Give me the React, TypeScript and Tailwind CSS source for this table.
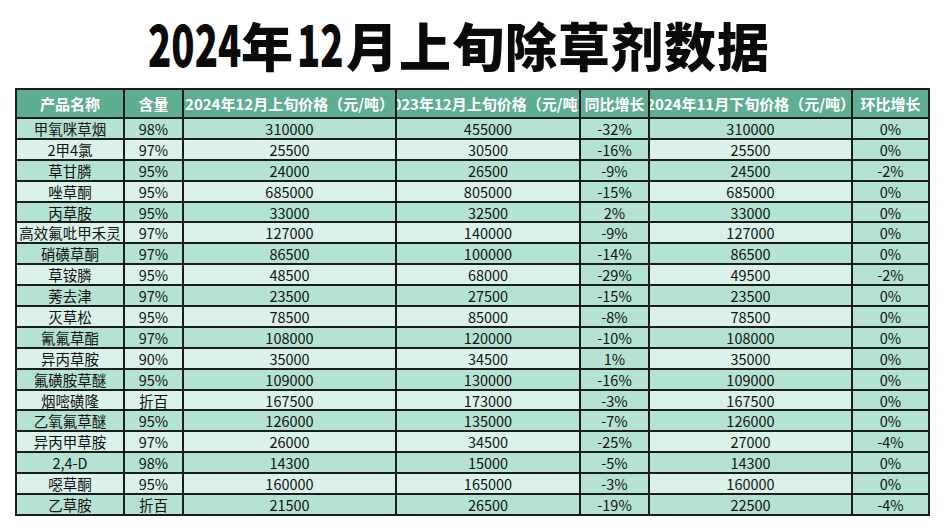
import React from "react";

type Row = [string, string, string, string, string, string, string];

const rows: Row[] = [
  ["甲氧咪草烟", "98%", "310000", "455000", "-32%", "310000", "0%"],
  ["2甲4氯", "97%", "25500", "30500", "-16%", "25500", "0%"],
  ["草甘膦", "95%", "24000", "26500", "-9%", "24500", "-2%"],
  ["唑草酮", "95%", "685000", "805000", "-15%", "685000", "0%"],
  ["丙草胺", "95%", "33000", "32500", "2%", "33000", "0%"],
  ["高效氟吡甲禾灵", "97%", "127000", "140000", "-9%", "127000", "0%"],
  ["硝磺草酮", "97%", "86500", "100000", "-14%", "86500", "0%"],
  ["草铵膦", "95%", "48500", "68000", "-29%", "49500", "-2%"],
  ["莠去津", "97%", "23500", "27500", "-15%", "23500", "0%"],
  ["灭草松", "95%", "78500", "85000", "-8%", "78500", "0%"],
  ["氰氟草酯", "97%", "108000", "120000", "-10%", "108000", "0%"],
  ["异丙草胺", "90%", "35000", "34500", "1%", "35000", "0%"],
  ["氟磺胺草醚", "95%", "109000", "130000", "-16%", "109000", "0%"],
  ["烟嘧磺隆", "折百", "167500", "173000", "-3%", "167500", "0%"],
  ["乙氧氟草醚", "95%", "126000", "135000", "-7%", "126000", "0%"],
  ["异丙甲草胺", "97%", "26000", "34500", "-25%", "27000", "-4%"],
  ["2,4-D", "98%", "14300", "15000", "-5%", "14300", "0%"],
  ["噁草酮", "95%", "160000", "165000", "-3%", "160000", "0%"],
  ["乙草胺", "折百", "21500", "26500", "-19%", "22500", "-4%"],
];

const headers = [
  "产品名称",
  "含量",
  "2024年12月上旬价格（元/吨）",
  "2023年12月上旬价格（元/吨）",
  "同比增长",
  "2024年11月下旬价格（元/吨）",
  "环比增长",
];

const widths = [108, 59, 213, 184, 69, 203, 77];

const font = { fontFamily: '"Noto Sans CJK SC", "Noto Sans", sans-serif' };

export default function App() {
  return (
    <div className="w-[945px] h-[531px] bg-white overflow-hidden" style={font}>
      <div className="h-[88px] flex items-center justify-center pb-[4px] pr-[27px]">
        <h1 className="text-[52px] leading-none font-black text-[#0a0a0a] whitespace-nowrap">
          <span className="inline-block w-[90px] align-baseline">
            <span className="inline-block text-[58px] origin-left scale-x-[0.66]">2024</span>
          </span>
          <span className="pl-[3px] pr-[4px]">年</span>
          <span className="inline-block w-[46px] align-baseline">
            <span className="inline-block text-[58px] origin-left scale-x-[0.66]">12</span>
          </span>
          <span className="pl-[3px] tracking-[1px]">月上旬除草剂数据</span>
        </h1>
      </div>
      <div className="pl-[15px]">
        <table className="table-fixed border-collapse w-[913px] border-2 border-[#1c1c1c]">
          <colgroup>
            {widths.map((w, i) => (
              <col key={i} style={{ width: w }} />
            ))}
          </colgroup>
          <thead>
            <tr className="h-[29px] bg-[#5fae92]">
              {headers.map((h, i) => (
                <th
                  key={i}
                  className="border-2 border-[#1c1c1c] p-0 font-bold text-white text-[15px]"
                >
                  <div className="flex justify-center overflow-hidden whitespace-nowrap leading-[25px]">
                    {h}
                  </div>
                </th>
              ))}
            </tr>
          </thead>
          <tbody>
            {rows.map((r, ri) => {
              const dark = ri % 2 === 0;
              return (
                <tr key={ri} className="h-[20.9px]">
                  {r.map((c, ci) => {
                    const isDark = dark || ci === 4 || ci === 6;
                    return (
                      <td
                        key={ci}
                        className={
                          "border-2 border-[#1c1c1c] p-0 text-center text-[14.5px] leading-[17px] text-[#111] whitespace-nowrap overflow-hidden " +
                          (isDark ? "bg-[#b4e3d3]" : "bg-[#daf2ea]")
                        }
                      >
                        {c}
                      </td>
                    );
                  })}
                </tr>
              );
            })}
          </tbody>
        </table>
      </div>
    </div>
  );
}
